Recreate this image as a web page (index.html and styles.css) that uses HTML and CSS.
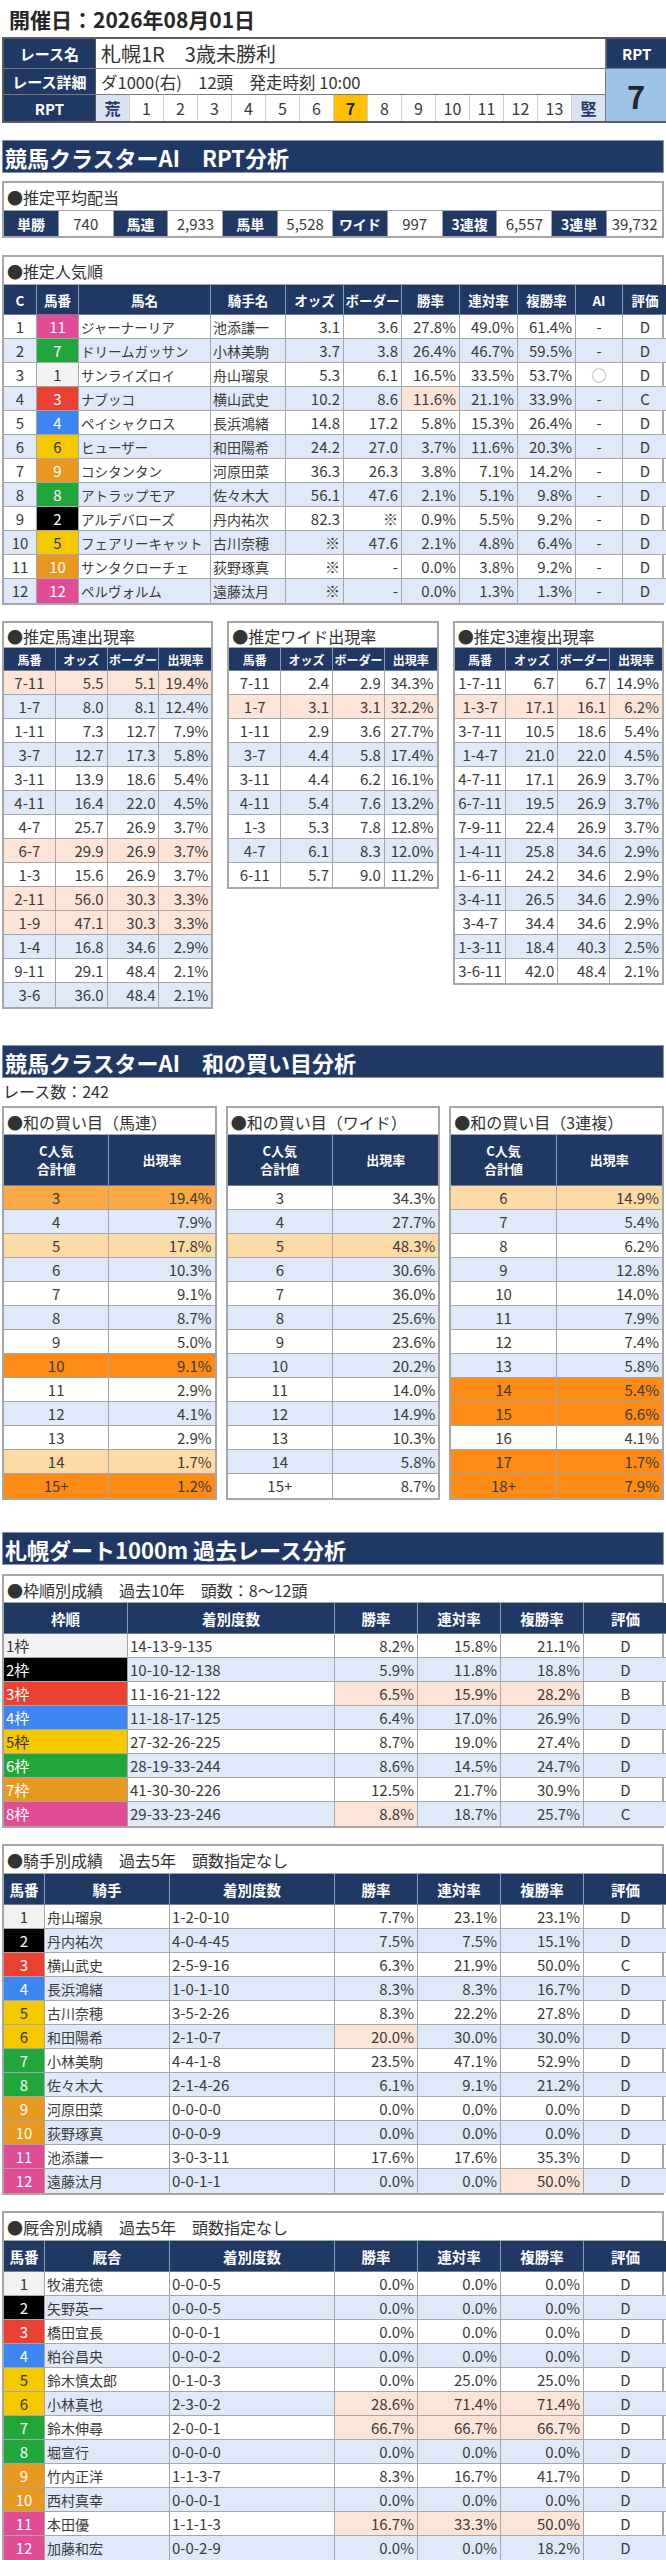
FILE: index.html
```html
<!DOCTYPE html>
<html lang="ja">
<head>
<meta charset="utf-8">
<title>開催日：2026年08月01日</title>
<link rel="stylesheet" href="styles.css">
</head>
<body>
<div class="page">
  <h1 class="title">開催日：2026年08月01日</h1>

  <table class="race">
    <colgroup><col class="rc-l"><col span="15" class="rc-n"><col class="rc-r"></colgroup>
    <tr class="r1">
      <th class="rl">レース名</th>
      <td colspan="15" class="rname">札幌1R　3歳未勝利</td>
      <th class="rpt-h">RPT</th>
    </tr>
    <tr class="r2">
      <th class="rl">レース詳細</th>
      <td colspan="15" class="rdet">ダ1000(右)　12頭　発走時刻 10:00</td>
      <td rowspan="2" class="rpt-v">7</td>
    </tr>
    <tr class="scale">
      <th class="rl">RPT</th>
      <td class="rk">荒</td><td>1</td><td>2</td><td>3</td><td>4</td><td>5</td><td>6</td><td class="hl">7</td><td>8</td><td>9</td><td>10</td><td>11</td><td>12</td><td>13</td><td class="rk">堅</td>
    </tr>
  </table>

  <h2 class="sec sec1">競馬クラスターAI　RPT分析</h2>

  <div class="box odds-box">
    <div class="box-title">●推定平均配当</div>
    <table class="t odds">
      <tr>
        <th>単勝</th><td>740</td><th>馬連</th><td>2,933</td><th>馬単</th><td>5,528</td><th>ワイド</th><td>997</td><th>3連複</th><td>6,557</td><th>3連単</th><td>39,732</td>
      </tr>
    </table>
  </div>

  <div class="box ninki-box">
    <div class="box-title">●推定人気順</div>
    <table class="t ninki">
      <colgroup><col class="n-c"><col class="n-b"><col class="n-nm"><col class="n-j"><col class="n-o"><col class="n-o"><col class="n-p"><col class="n-p"><col class="n-p"><col class="n-ai"><col class="n-ev"></colgroup>
      <tr class="hd"><th>C</th><th>馬番</th><th>馬名</th><th>騎手名</th><th>オッズ</th><th>ボーダー</th><th>勝率</th><th>連対率</th><th>複勝率</th><th>AI</th><th>評価</th></tr>
      <tr><td class="c">1</td><td class="c u11">11</td><td class="nm">ジャーナーリア</td><td class="jk">池添謙一</td><td class="r">3.1</td><td class="r">3.6</td><td class="r">27.8%</td><td class="r">49.0%</td><td class="r">61.4%</td><td class="c">-</td><td class="c">D</td></tr>
      <tr class="z"><td class="c">2</td><td class="c u7">7</td><td class="nm">ドリームガッサン</td><td class="jk">小林美駒</td><td class="r">3.7</td><td class="r">3.8</td><td class="r">26.4%</td><td class="r">46.7%</td><td class="r">59.5%</td><td class="c">-</td><td class="c">D</td></tr>
      <tr><td class="c">3</td><td class="c u1">1</td><td class="nm">サンライズロイ</td><td class="jk">舟山瑠泉</td><td class="r">5.3</td><td class="r">6.1</td><td class="r">16.5%</td><td class="r">33.5%</td><td class="r">53.7%</td><td class="c ai">○</td><td class="c">D</td></tr>
      <tr class="z"><td class="c">4</td><td class="c u3">3</td><td class="nm">ナブッコ</td><td class="jk">横山武史</td><td class="r">10.2</td><td class="r">8.6</td><td class="r pk">11.6%</td><td class="r">21.1%</td><td class="r">33.9%</td><td class="c">-</td><td class="c">C</td></tr>
      <tr><td class="c">5</td><td class="c u4">4</td><td class="nm">ペイシャクロス</td><td class="jk">長浜鴻緒</td><td class="r">14.8</td><td class="r">17.2</td><td class="r">5.8%</td><td class="r">15.3%</td><td class="r">26.4%</td><td class="c">-</td><td class="c">D</td></tr>
      <tr class="z"><td class="c">6</td><td class="c u6">6</td><td class="nm">ヒューザー</td><td class="jk">和田陽希</td><td class="r">24.2</td><td class="r">27.0</td><td class="r">3.7%</td><td class="r">11.6%</td><td class="r">20.3%</td><td class="c">-</td><td class="c">D</td></tr>
      <tr><td class="c">7</td><td class="c u9">9</td><td class="nm">コシタンタン</td><td class="jk">河原田菜</td><td class="r">36.3</td><td class="r">26.3</td><td class="r">3.8%</td><td class="r">7.1%</td><td class="r">14.2%</td><td class="c">-</td><td class="c">D</td></tr>
      <tr class="z"><td class="c">8</td><td class="c u8">8</td><td class="nm">アトラップモア</td><td class="jk">佐々木大</td><td class="r">56.1</td><td class="r">47.6</td><td class="r">2.1%</td><td class="r">5.1%</td><td class="r">9.8%</td><td class="c">-</td><td class="c">D</td></tr>
      <tr><td class="c">9</td><td class="c u2">2</td><td class="nm">アルデバローズ</td><td class="jk">丹内祐次</td><td class="r">82.3</td><td class="r">※</td><td class="r">0.9%</td><td class="r">5.5%</td><td class="r">9.2%</td><td class="c">-</td><td class="c">D</td></tr>
      <tr class="z"><td class="c">10</td><td class="c u5">5</td><td class="nm">フェアリーキャット</td><td class="jk">古川奈穂</td><td class="r">※</td><td class="r">47.6</td><td class="r">2.1%</td><td class="r">4.8%</td><td class="r">6.4%</td><td class="c">-</td><td class="c">D</td></tr>
      <tr><td class="c">11</td><td class="c u10">10</td><td class="nm">サンタクローチェ</td><td class="jk">荻野琢真</td><td class="r">※</td><td class="r">-</td><td class="r">0.0%</td><td class="r">3.8%</td><td class="r">9.2%</td><td class="c">-</td><td class="c">D</td></tr>
      <tr class="z"><td class="c">12</td><td class="c u12">12</td><td class="nm">ペルヴォルム</td><td class="jk">遠藤汰月</td><td class="r">※</td><td class="r">-</td><td class="r">0.0%</td><td class="r">1.3%</td><td class="r">1.3%</td><td class="c">-</td><td class="c">D</td></tr>
    </table>
  </div>

  <div class="trio">
    <div class="box sm">
      <div class="box-title sm-title">●推定馬連出現率</div>
      <table class="t sm-t">
        <tr class="hd"><th>馬番</th><th>オッズ</th><th>ボーダー</th><th>出現率</th></tr>
        <tr class="pkr"><td class="c">7-11</td><td class="r">5.5</td><td class="r">5.1</td><td class="r">19.4%</td></tr>
        <tr class="z"><td class="c">1-7</td><td class="r">8.0</td><td class="r">8.1</td><td class="r">12.4%</td></tr>
        <tr><td class="c">1-11</td><td class="r">7.3</td><td class="r">12.7</td><td class="r">7.9%</td></tr>
        <tr class="z"><td class="c">3-7</td><td class="r">12.7</td><td class="r">17.3</td><td class="r">5.8%</td></tr>
        <tr><td class="c">3-11</td><td class="r">13.9</td><td class="r">18.6</td><td class="r">5.4%</td></tr>
        <tr class="z"><td class="c">4-11</td><td class="r">16.4</td><td class="r">22.0</td><td class="r">4.5%</td></tr>
        <tr><td class="c">4-7</td><td class="r">25.7</td><td class="r">26.9</td><td class="r">3.7%</td></tr>
        <tr class="pkr"><td class="c">6-7</td><td class="r">29.9</td><td class="r">26.9</td><td class="r">3.7%</td></tr>
        <tr><td class="c">1-3</td><td class="r">15.6</td><td class="r">26.9</td><td class="r">3.7%</td></tr>
        <tr class="pkr"><td class="c">2-11</td><td class="r">56.0</td><td class="r">30.3</td><td class="r">3.3%</td></tr>
        <tr class="pkr"><td class="c">1-9</td><td class="r">47.1</td><td class="r">30.3</td><td class="r">3.3%</td></tr>
        <tr class="z"><td class="c">1-4</td><td class="r">16.8</td><td class="r">34.6</td><td class="r">2.9%</td></tr>
        <tr><td class="c">9-11</td><td class="r">29.1</td><td class="r">48.4</td><td class="r">2.1%</td></tr>
        <tr class="z"><td class="c">3-6</td><td class="r">36.0</td><td class="r">48.4</td><td class="r">2.1%</td></tr>
      </table>
    </div>
    <div class="box sm">
      <div class="box-title sm-title">●推定ワイド出現率</div>
      <table class="t sm-t">
        <tr class="hd"><th>馬番</th><th>オッズ</th><th>ボーダー</th><th>出現率</th></tr>
        <tr><td class="c">7-11</td><td class="r">2.4</td><td class="r">2.9</td><td class="r">34.3%</td></tr>
        <tr class="pkr"><td class="c">1-7</td><td class="r">3.1</td><td class="r">3.1</td><td class="r">32.2%</td></tr>
        <tr><td class="c">1-11</td><td class="r">2.9</td><td class="r">3.6</td><td class="r">27.7%</td></tr>
        <tr class="z"><td class="c">3-7</td><td class="r">4.4</td><td class="r">5.8</td><td class="r">17.4%</td></tr>
        <tr><td class="c">3-11</td><td class="r">4.4</td><td class="r">6.2</td><td class="r">16.1%</td></tr>
        <tr class="z"><td class="c">4-11</td><td class="r">5.4</td><td class="r">7.6</td><td class="r">13.2%</td></tr>
        <tr><td class="c">1-3</td><td class="r">5.3</td><td class="r">7.8</td><td class="r">12.8%</td></tr>
        <tr class="z"><td class="c">4-7</td><td class="r">6.1</td><td class="r">8.3</td><td class="r">12.0%</td></tr>
        <tr><td class="c">6-11</td><td class="r">5.7</td><td class="r">9.0</td><td class="r">11.2%</td></tr>
      </table>
    </div>
    <div class="box sm">
      <div class="box-title sm-title">●推定3連複出現率</div>
      <table class="t sm-t">
        <tr class="hd"><th>馬番</th><th>オッズ</th><th>ボーダー</th><th>出現率</th></tr>
        <tr><td class="c">1-7-11</td><td class="r">6.7</td><td class="r">6.7</td><td class="r">14.9%</td></tr>
        <tr class="pkr"><td class="c">1-3-7</td><td class="r">17.1</td><td class="r">16.1</td><td class="r">6.2%</td></tr>
        <tr><td class="c">3-7-11</td><td class="r">10.5</td><td class="r">18.6</td><td class="r">5.4%</td></tr>
        <tr class="z"><td class="c">1-4-7</td><td class="r">21.0</td><td class="r">22.0</td><td class="r">4.5%</td></tr>
        <tr><td class="c">4-7-11</td><td class="r">17.1</td><td class="r">26.9</td><td class="r">3.7%</td></tr>
        <tr class="z"><td class="c">6-7-11</td><td class="r">19.5</td><td class="r">26.9</td><td class="r">3.7%</td></tr>
        <tr><td class="c">7-9-11</td><td class="r">22.4</td><td class="r">26.9</td><td class="r">3.7%</td></tr>
        <tr class="z"><td class="c">1-4-11</td><td class="r">25.8</td><td class="r">34.6</td><td class="r">2.9%</td></tr>
        <tr><td class="c">1-6-11</td><td class="r">24.2</td><td class="r">34.6</td><td class="r">2.9%</td></tr>
        <tr class="z"><td class="c">3-4-11</td><td class="r">26.5</td><td class="r">34.6</td><td class="r">2.9%</td></tr>
        <tr><td class="c">3-4-7</td><td class="r">34.4</td><td class="r">34.6</td><td class="r">2.9%</td></tr>
        <tr class="z"><td class="c">1-3-11</td><td class="r">18.4</td><td class="r">40.3</td><td class="r">2.5%</td></tr>
        <tr><td class="c">3-6-11</td><td class="r">42.0</td><td class="r">48.4</td><td class="r">2.1%</td></tr>
      </table>
    </div>
  </div>

  <h2 class="sec sec2">競馬クラスターAI　和の買い目分析</h2>
  <p class="count">レース数：242</p>

  <div class="trio trio2">
    <div class="box sm">
      <div class="box-title wa-title">●和の買い目（馬連）</div>
      <table class="t wa">
        <tr class="hd2"><th>C人気<br>合計値</th><th>出現率</th></tr>
        <tr class="o2"><td class="c">3</td><td class="r">19.4%</td></tr>
        <tr class="z"><td class="c">4</td><td class="r">7.9%</td></tr>
        <tr class="o1"><td class="c">5</td><td class="r">17.8%</td></tr>
        <tr class="z"><td class="c">6</td><td class="r">10.3%</td></tr>
        <tr><td class="c">7</td><td class="r">9.1%</td></tr>
        <tr class="z"><td class="c">8</td><td class="r">8.7%</td></tr>
        <tr><td class="c">9</td><td class="r">5.0%</td></tr>
        <tr class="o3"><td class="c">10</td><td class="r">9.1%</td></tr>
        <tr><td class="c">11</td><td class="r">2.9%</td></tr>
        <tr class="z"><td class="c">12</td><td class="r">4.1%</td></tr>
        <tr><td class="c">13</td><td class="r">2.9%</td></tr>
        <tr class="o1"><td class="c">14</td><td class="r">1.7%</td></tr>
        <tr class="o3"><td class="c">15+</td><td class="r">1.2%</td></tr>
      </table>
    </div>
    <div class="box sm">
      <div class="box-title wa-title">●和の買い目（ワイド）</div>
      <table class="t wa">
        <tr class="hd2"><th>C人気<br>合計値</th><th>出現率</th></tr>
        <tr><td class="c">3</td><td class="r">34.3%</td></tr>
        <tr class="z"><td class="c">4</td><td class="r">27.7%</td></tr>
        <tr class="o1"><td class="c">5</td><td class="r">48.3%</td></tr>
        <tr class="z"><td class="c">6</td><td class="r">30.6%</td></tr>
        <tr><td class="c">7</td><td class="r">36.0%</td></tr>
        <tr class="z"><td class="c">8</td><td class="r">25.6%</td></tr>
        <tr><td class="c">9</td><td class="r">23.6%</td></tr>
        <tr class="z"><td class="c">10</td><td class="r">20.2%</td></tr>
        <tr><td class="c">11</td><td class="r">14.0%</td></tr>
        <tr class="z"><td class="c">12</td><td class="r">14.9%</td></tr>
        <tr><td class="c">13</td><td class="r">10.3%</td></tr>
        <tr class="z"><td class="c">14</td><td class="r">5.8%</td></tr>
        <tr><td class="c">15+</td><td class="r">8.7%</td></tr>
      </table>
    </div>
    <div class="box sm">
      <div class="box-title wa-title">●和の買い目（3連複）</div>
      <table class="t wa">
        <tr class="hd2"><th>C人気<br>合計値</th><th>出現率</th></tr>
        <tr class="o1"><td class="c">6</td><td class="r">14.9%</td></tr>
        <tr class="z"><td class="c">7</td><td class="r">5.4%</td></tr>
        <tr><td class="c">8</td><td class="r">6.2%</td></tr>
        <tr class="z"><td class="c">9</td><td class="r">12.8%</td></tr>
        <tr><td class="c">10</td><td class="r">14.0%</td></tr>
        <tr class="z"><td class="c">11</td><td class="r">7.9%</td></tr>
        <tr><td class="c">12</td><td class="r">7.4%</td></tr>
        <tr class="z"><td class="c">13</td><td class="r">5.8%</td></tr>
        <tr class="o3"><td class="c">14</td><td class="r">5.4%</td></tr>
        <tr class="o3"><td class="c">15</td><td class="r">6.6%</td></tr>
        <tr><td class="c">16</td><td class="r">4.1%</td></tr>
        <tr class="o3"><td class="c">17</td><td class="r">1.7%</td></tr>
        <tr class="o3"><td class="c">18+</td><td class="r">7.9%</td></tr>
      </table>
    </div>
  </div>

  <h2 class="sec sec3">札幌ダート1000m 過去レース分析</h2>

  <div class="box past waku-box">
    <div class="box-title pt-title">●枠順別成績　過去10年　頭数：8～12頭</div>
    <table class="t pt">
      <colgroup><col class="w-w"><col class="w-s"><col class="w-p"><col class="w-p"><col class="w-p"><col class="w-p"></colgroup>
      <tr class="hd"><th>枠順</th><th>着別度数</th><th>勝率</th><th>連対率</th><th>複勝率</th><th>評価</th></tr>
      <tr><td class="l u1">1枠</td><td class="l">14-13-9-135</td><td class="r">8.2%</td><td class="r">15.8%</td><td class="r">21.1%</td><td class="c">D</td></tr>
      <tr class="z"><td class="l u2">2枠</td><td class="l">10-10-12-138</td><td class="r">5.9%</td><td class="r">11.8%</td><td class="r">18.8%</td><td class="c">D</td></tr>
      <tr><td class="l u3">3枠</td><td class="l">11-16-21-122</td><td class="r pk">6.5%</td><td class="r pk">15.9%</td><td class="r pk">28.2%</td><td class="c">B</td></tr>
      <tr class="z"><td class="l u4">4枠</td><td class="l">11-18-17-125</td><td class="r">6.4%</td><td class="r">17.0%</td><td class="r">26.9%</td><td class="c">D</td></tr>
      <tr><td class="l u5">5枠</td><td class="l">27-32-26-225</td><td class="r">8.7%</td><td class="r">19.0%</td><td class="r">27.4%</td><td class="c">D</td></tr>
      <tr class="z"><td class="l u7">6枠</td><td class="l">28-19-33-244</td><td class="r">8.6%</td><td class="r">14.5%</td><td class="r">24.7%</td><td class="c">D</td></tr>
      <tr><td class="l u9">7枠</td><td class="l">41-30-30-226</td><td class="r">12.5%</td><td class="r">21.7%</td><td class="r">30.9%</td><td class="c">D</td></tr>
      <tr class="z"><td class="l u11">8枠</td><td class="l">29-33-23-246</td><td class="r pk">8.8%</td><td class="r">18.7%</td><td class="r">25.7%</td><td class="c">C</td></tr>
    </table>
  </div>

  <div class="box past">
    <div class="box-title">●騎手別成績　過去5年　頭数指定なし</div>
    <table class="t pt">
      <colgroup><col class="p-b"><col class="p-n"><col class="p-s"><col class="w-p"><col class="w-p"><col class="w-p"><col class="w-p"></colgroup>
      <tr class="hd"><th>馬番</th><th>騎手</th><th>着別度数</th><th>勝率</th><th>連対率</th><th>複勝率</th><th>評価</th></tr>
      <tr><td class="c u1">1</td><td class="l jk">舟山瑠泉</td><td class="l">1-2-0-10</td><td class="r">7.7%</td><td class="r">23.1%</td><td class="r">23.1%</td><td class="c">D</td></tr>
      <tr class="z"><td class="c u2">2</td><td class="l jk">丹内祐次</td><td class="l">4-0-4-45</td><td class="r">7.5%</td><td class="r">7.5%</td><td class="r">15.1%</td><td class="c">D</td></tr>
      <tr><td class="c u3">3</td><td class="l jk">横山武史</td><td class="l">2-5-9-16</td><td class="r">6.3%</td><td class="r">21.9%</td><td class="r">50.0%</td><td class="c">C</td></tr>
      <tr class="z"><td class="c u4">4</td><td class="l jk">長浜鴻緒</td><td class="l">1-0-1-10</td><td class="r">8.3%</td><td class="r">8.3%</td><td class="r">16.7%</td><td class="c">D</td></tr>
      <tr><td class="c u5">5</td><td class="l jk">古川奈穂</td><td class="l">3-5-2-26</td><td class="r">8.3%</td><td class="r">22.2%</td><td class="r">27.8%</td><td class="c">D</td></tr>
      <tr class="z"><td class="c u6">6</td><td class="l jk">和田陽希</td><td class="l">2-1-0-7</td><td class="r pk">20.0%</td><td class="r">30.0%</td><td class="r">30.0%</td><td class="c">D</td></tr>
      <tr><td class="c u7">7</td><td class="l jk">小林美駒</td><td class="l">4-4-1-8</td><td class="r">23.5%</td><td class="r">47.1%</td><td class="r">52.9%</td><td class="c">D</td></tr>
      <tr class="z"><td class="c u8">8</td><td class="l jk">佐々木大</td><td class="l">2-1-4-26</td><td class="r">6.1%</td><td class="r">9.1%</td><td class="r">21.2%</td><td class="c">D</td></tr>
      <tr><td class="c u9">9</td><td class="l jk">河原田菜</td><td class="l">0-0-0-0</td><td class="r">0.0%</td><td class="r">0.0%</td><td class="r">0.0%</td><td class="c">D</td></tr>
      <tr class="z"><td class="c u10">10</td><td class="l jk">荻野琢真</td><td class="l">0-0-0-9</td><td class="r">0.0%</td><td class="r">0.0%</td><td class="r">0.0%</td><td class="c">D</td></tr>
      <tr><td class="c u11">11</td><td class="l jk">池添謙一</td><td class="l">3-0-3-11</td><td class="r">17.6%</td><td class="r">17.6%</td><td class="r">35.3%</td><td class="c">D</td></tr>
      <tr class="z"><td class="c u12">12</td><td class="l jk">遠藤汰月</td><td class="l">0-0-1-1</td><td class="r">0.0%</td><td class="r">0.0%</td><td class="r pk">50.0%</td><td class="c">D</td></tr>
    </table>
  </div>

  <div class="box past">
    <div class="box-title">●厩舎別成績　過去5年　頭数指定なし</div>
    <table class="t pt">
      <colgroup><col class="p-b"><col class="p-n"><col class="p-s"><col class="w-p"><col class="w-p"><col class="w-p"><col class="w-p"></colgroup>
      <tr class="hd"><th>馬番</th><th>厩舎</th><th>着別度数</th><th>勝率</th><th>連対率</th><th>複勝率</th><th>評価</th></tr>
      <tr><td class="c u1">1</td><td class="l jk">牧浦充徳</td><td class="l">0-0-0-5</td><td class="r">0.0%</td><td class="r">0.0%</td><td class="r">0.0%</td><td class="c">D</td></tr>
      <tr class="z"><td class="c u2">2</td><td class="l jk">矢野英一</td><td class="l">0-0-0-5</td><td class="r">0.0%</td><td class="r">0.0%</td><td class="r">0.0%</td><td class="c">D</td></tr>
      <tr><td class="c u3">3</td><td class="l jk">橋田宜長</td><td class="l">0-0-0-1</td><td class="r">0.0%</td><td class="r">0.0%</td><td class="r">0.0%</td><td class="c">D</td></tr>
      <tr class="z"><td class="c u4">4</td><td class="l jk">粕谷昌央</td><td class="l">0-0-0-2</td><td class="r">0.0%</td><td class="r">0.0%</td><td class="r">0.0%</td><td class="c">D</td></tr>
      <tr><td class="c u5">5</td><td class="l jk">鈴木慎太郎</td><td class="l">0-1-0-3</td><td class="r">0.0%</td><td class="r">25.0%</td><td class="r">25.0%</td><td class="c">D</td></tr>
      <tr class="z"><td class="c u6">6</td><td class="l jk">小林真也</td><td class="l">2-3-0-2</td><td class="r pk">28.6%</td><td class="r pk">71.4%</td><td class="r pk">71.4%</td><td class="c">D</td></tr>
      <tr><td class="c u7">7</td><td class="l jk">鈴木伸尋</td><td class="l">2-0-0-1</td><td class="r pk">66.7%</td><td class="r pk">66.7%</td><td class="r pk">66.7%</td><td class="c">D</td></tr>
      <tr class="z"><td class="c u8">8</td><td class="l jk">堀宣行</td><td class="l">0-0-0-0</td><td class="r">0.0%</td><td class="r">0.0%</td><td class="r">0.0%</td><td class="c">D</td></tr>
      <tr><td class="c u9">9</td><td class="l jk">竹内正洋</td><td class="l">1-1-3-7</td><td class="r">8.3%</td><td class="r">16.7%</td><td class="r">41.7%</td><td class="c">D</td></tr>
      <tr class="z"><td class="c u10">10</td><td class="l jk">西村真幸</td><td class="l">0-0-0-1</td><td class="r">0.0%</td><td class="r">0.0%</td><td class="r">0.0%</td><td class="c">D</td></tr>
      <tr><td class="c u11">11</td><td class="l jk">本田優</td><td class="l">1-1-1-3</td><td class="r pk">16.7%</td><td class="r pk">33.3%</td><td class="r pk">50.0%</td><td class="c">D</td></tr>
      <tr class="z"><td class="c u12">12</td><td class="l jk">加藤和宏</td><td class="l">0-0-2-9</td><td class="r">0.0%</td><td class="r">0.0%</td><td class="r">18.2%</td><td class="c">D</td></tr>
    </table>
  </div>
</div>
</body>
</html>
```

FILE: styles.css
```css
* { box-sizing: border-box; }
html, body { margin: 0; padding: 0; background: #fff; }
body {
  font-family: "Noto Sans CJK JP", "Noto Sans", "Liberation Sans", sans-serif;
  color: #3a3a3a;
  width: 666px;
}
.page { padding: 0 2px; }

.title {
  margin: 0;
  height: 37px;
  line-height: 38px;
  font-size: 21px;
  font-weight: bold;
  color: #262626;
  padding-left: 7px;
}

/* race info */
.race {
  width: 662px;
  border-collapse: separate;
  border-spacing: 0;
  table-layout: fixed;
  border: 2px solid #5c5c5c;
}
.rc-l { width: 92px; }
.rc-n { width: 34px; }
.rc-r { width: 60px; }
.race th, .race td {
  padding: 0;
  border-right: 1px solid #7a7a7a;
  border-bottom: 1px solid #7a7a7a;
}
.race tr > :last-child { border-right: 0; }
.race .r1 > * { height: 27px; }
.race .r2 > * { height: 26px; }
.race .scale > * { height: 26px; border-bottom: 0; }
.race .rl {
  background: #1f3864;
  color: #fff;
  font-size: 15px;
  font-weight: bold;
  text-align: center;
  border-right-color: #5c5c5c;
}
.race .rname {
  font-size: 20px;
  padding-left: 5px;
  color: #333;
}
.race .rdet {
  font-size: 16.5px;
  padding-left: 5px;
  color: #333;
}
.race .scale td {
  text-align: center;
  font-size: 16px;
  border-right-color: #d2d2d2;
}
.race .scale td.rk {
  background: #dae3f3;
  color: #1f3864;
  font-weight: bold;
}
.race .scale td:nth-child(16) { border-right: 1px solid #7a7a7a; }
.race .scale td.hl {
  background: #ffc000;
  font-weight: bold;
  color: #222;
}
.race .rpt-h {
  background: #1f3864;
  color: #fff;
  font-size: 15px;
  font-weight: bold;
  text-align: center;
  border-left: 1px solid #5c5c5c;
}
.race .rpt-v {
  background: #9dc3e6;
  color: #262626;
  font-size: 31px;
  font-weight: bold;
  text-align: center;
  border-bottom: 0;
}

/* section headers */
.sec {
  margin: 0;
  height: 33px;
  line-height: 32px;
  background: #1f3864;
  color: #fff;
  font-size: 22px;
  font-weight: bold;
  padding-left: 2px;
  border: 1px solid #8792a8;
}
.sec1 { margin-top: 17px; }
.sec2 { margin-top: 36px; }
.sec3 { margin-top: 32px; }

/* boxes */
.box {
  border: 2px solid #a6a6a6;
  background: #fff;
}
.box-title {
  height: 28px;
  line-height: 29px;
  font-size: 16px;
  padding-left: 3px;
  color: #333;
  border-bottom: 1px solid #a6a6a6;
  white-space: nowrap;
}
.odds-box { margin-top: 8px; }
.ninki-box { margin-top: 17px; }

.t {
  width: 100%;
  border-collapse: separate;
  border-spacing: 0;
  table-layout: fixed;
}
.t th, .t td {
  padding: 0;
  border-right: 1px solid #a6a6a6;
  border-bottom: 1px solid #a6a6a6;
  white-space: nowrap;
  overflow: hidden;
}
.t tr > :last-child { border-right: 0; }
.t tr:last-child > * { border-bottom: 0; }
.t th {
  background: #1f3864;
  color: #fff;
  font-weight: bold;
  font-size: 14px;
  text-align: center;
  border-right-color: #8d98b0;
  border-bottom-color: #6f7c96;
}
.t td {
  height: 24px;
  padding: 0 3px;
  font-size: 15px;
  line-height: 20px;
}

.odds th, .odds td { height: 25px; text-align: center; }
.odds th { font-size: 14px; }
.odds td { font-size: 15px; padding: 0 1px; }

.t tr.hd th { height: 30px; }
.ninki .hd th { font-size: 13.5px; }

.c { text-align: center; }
.r { text-align: right; }
.l { text-align: left; }
.t tr.z td { background: #dfe9f9; }
.t tr td.pk, .t tr.pkr td { background: #fce4d6; }
.t td.nm { font-size: 13.5px; padding-left: 2px; }
.t td.jk { font-size: 14px; padding-left: 2px; }
.t td.ai { color: #999; }

.n-c { width: 33px; }
.n-b { width: 42px; }
.n-nm { width: 132px; }
.n-j { width: 75px; }
.n-o { width: 58px; }
.n-p { width: 58px; }
.n-ai { width: 47px; }
.n-ev { width: 44px; }

/* waku colours */
.t tr td.u1 { background: #f2f2f2; color: #333; }
.t tr td.u2 { background: #000; color: #fff; }
.t tr td.u3 { background: #ea4133; color: #fff; }
.t tr td.u4 { background: #3d85f0; color: #fff; }
.t tr td.u5, .t tr td.u6 { background: #f4c900; color: #333; }
.t tr td.u7, .t tr td.u8 { background: #21a63c; color: #fff; }
.t tr td.u9, .t tr td.u10 { background: #e9981f; color: #fff; }
.t tr td.u11, .t tr td.u12 { background: #e14c95; color: #fff; }

/* trio boxes */
.trio {
  display: flex;
  align-items: flex-start;
  gap: 14px;
  margin-top: 16px;
}
.trio .sm { flex: 1 1 0; min-width: 0; }
.sm-title { height: 25px; line-height: 26px; }
.sm-t tr.hd th { height: 23px; font-size: 12px; }
.sm-t td.c { padding: 0 2px; }

.count {
  margin: 0;
  height: 28px;
  line-height: 27px;
  font-size: 16px;
  color: #333;
  padding-left: 1px;
}
.trio2 { gap: 9px; margin-top: 0; }
.wa-title { height: 27px; line-height: 28px; }
.wa .hd2 th {
  height: 51px;
  font-size: 13px;
  line-height: 1.35;
}
.wa tr.o1 td { background: #fedaa6; }
.wa tr.o2 td { background: #fba845; }
.wa tr.o3 td { background: #fe8b16; }

/* past analysis */
.past { margin-top: 16px; }
.waku-box { margin-top: 9px; }
.pt-title { height: 27px; line-height: 28px; }
.pt tr.hd th { height: 31px; font-size: 14.5px; }
.pt td.l { padding-left: 2px; }
.w-w { width: 124px; }
.w-s { width: 207px; }
.w-p { width: 83px; }
.p-b { width: 41px; }
.p-n { width: 125px; }
.p-s { width: 165px; }
```
